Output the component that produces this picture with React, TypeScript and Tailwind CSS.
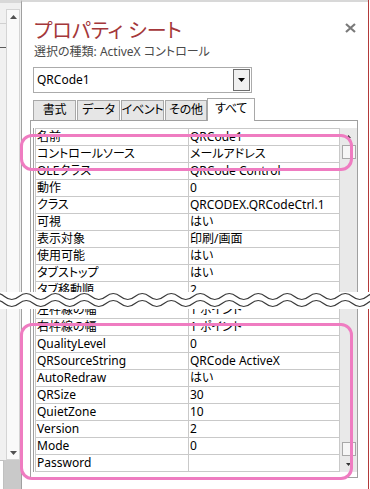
const upperRows: [string, string][] = [
  ["名前", "QRCode1"],
  ["コントロールソース", "メールアドレス"],
  ["OLEクラス", "QRCode Control"],
  ["動作", "0"],
  ["クラス", "QRCODEX.QRCodeCtrl.1"],
  ["可視", "はい"],
  ["表示対象", "印刷/画面"],
  ["使用可能", "はい"],
  ["タブストップ", "はい"],
  ["タブ移動順", "2"],
];

const lowerRows: [string, string][] = [
  ["左枠線の幅", "1 ポイント"],
  ["右枠線の幅", "1 ポイント"],
  ["QualityLevel", "0"],
  ["QRSourceString", "QRCode ActiveX"],
  ["AutoRedraw", "はい"],
  ["QRSize", "30"],
  ["QuietZone", "10"],
  ["Version", "2"],
  ["Mode", "0"],
  ["Password", ""],
];

const wave = (y: number) => {
  let d = `M-10 ${y}`;
  for (let x = -10; x < 390; x += 29) {
    d += ` Q${x + 7.25} ${y - 6} ${x + 14.5} ${y} Q${x + 21.75} ${y + 6} ${x + 29} ${y}`;
  }
  return d;
};

const Row = ({ name, value }: { name: string; value: string }) => (
  <div className="flex h-[17px] border-b border-[#c9c9c9] text-[12px] leading-[16px] text-black">
    <div className="w-[153px] border-l border-[#c9c9c9] pl-[1px] whitespace-nowrap overflow-hidden">{name}</div>
    <div className="w-[152px] border-x border-[#c9c9c9] pl-[1px] whitespace-nowrap overflow-hidden">{value}</div>
  </div>
);

const Tri = ({ down }: { down?: boolean }) => (
  <svg width="7" height="4" viewBox="0 0 7 4">
    <path d={down ? "M0 0H7L3.5 4Z" : "M0 4H7L3.5 0Z"} fill="#505050" />
  </svg>
);

const App = () => {
  return (
    <div className="relative w-[370px] h-[489px] overflow-hidden bg-white flex font-['Noto_Sans','Noto_Sans_CJK_JP',sans-serif] [font-feature-settings:'palt']">
      {/* window behind */}
      <div className="w-[21px] h-full flex flex-col bg-[#f0f0f0] border-t-[3px] border-[#d8d8d8]">
        <div className="flex flex-1">
          <div className="w-[6px] flex flex-col">
            <div className="h-[21px] border-b border-[#d0d0d0]" />
            <div className="h-[24px] border-b border-[#5a5a5a]" />
          </div>
          <div className="w-[14px] mt-[6px] border border-[#d4d4d4] bg-[#f9f9f9] flex flex-col justify-between">
            <div className="h-[13px] flex items-center justify-center">
              <Tri />
            </div>
            <div className="h-[13px] flex items-center justify-center">
              <Tri down />
            </div>
          </div>
        </div>
        <div className="h-[29px] flex">
          <div className="w-[4px] bg-white border-t border-r border-[#c0c0c0]" />
          <div className="flex-1 bg-[#c9c9c9]" />
        </div>
      </div>

      {/* property sheet */}
      <div className="w-[347px] h-full border-l border-[#a0a0a0] border-t-2 border-t-[#d8d8d8] flex flex-col pt-[15px]">
        <div className="flex justify-between items-start pl-[12px] pr-[12px]">
          <h1 className="text-[20px] leading-[27px] text-[#a4373a]">プロパティ シート</h1>
          <svg width="11" height="10" viewBox="0 0 11 10" className="mt-[6px]">
            <path d="M1 1L10 9M10 1L1 9" stroke="#7a7a7a" strokeWidth="2.2" />
          </svg>
        </div>
        <p className="pl-[12px] text-[12px] leading-[16px] text-[#4a4a4a]">選択の種類: ActiveX コントロール</p>

        <div className="ml-[11px] mt-[7px] w-[219px] h-[26px] border border-[#ababab] flex items-center justify-between pl-[3px] pr-[1px]">
          <span className="text-[12px] text-black">QRCode1</span>
          <div className="w-[17px] h-[22px] border border-[#6e6e6e] bg-[#f0f0f0] flex items-center justify-center">
            <svg width="7" height="4" viewBox="0 0 7 4">
              <path d="M0 0H7L3.5 4Z" fill="#000" />
            </svg>
          </div>
        </div>

        <div className="ml-[11px] mt-[4px] h-[23px] flex items-end relative z-10 text-[12px] text-black whitespace-nowrap tracking-[-0.3px]">
          <div className="w-[43px] mr-[1px] h-[20px] border border-b-0 border-[#a8a8a8] bg-[#e6e6e6] flex justify-center leading-[18px] overflow-hidden">書式</div>
          <div className="w-[43px] mr-[1px] h-[20px] border border-b-0 border-[#a8a8a8] bg-[#e6e6e6] flex justify-center leading-[18px] overflow-hidden">データ</div>
          <div className="w-[43px] mr-[1px] h-[20px] border border-b-0 border-[#a8a8a8] bg-[#e6e6e6] flex justify-center leading-[18px] overflow-hidden">イベント</div>
          <div className="w-[42px] h-[20px] border border-b-0 border-[#a8a8a8] bg-[#e6e6e6] flex justify-center leading-[18px] overflow-hidden">その他</div>
          <div className="w-[48px] h-[23px] -mb-[1px] border border-b-0 border-[#a8a8a8] bg-white flex justify-center leading-[20px]">すべて</div>
        </div>

        <div className="ml-[8px] w-[328px] h-[358px] border border-[#a0a0a0] pt-[7px] pl-[2px]">
          <div className="flex border-l border-[#a0a0a0] pl-[1px]">
            <div className="border-t border-[#c9c9c9]">
              {upperRows.map(([n, v]) => (
                <Row key={n} name={n} value={v} />
              ))}
              <div className="h-[3px] border-b border-[#c9c9c9]" />
              {lowerRows.map(([n, v]) => (
                <Row key={n} name={n} value={v} />
              ))}
            </div>
            <div className="w-[17px] bg-[#e9e9e9] flex flex-col items-center">
              <div className="h-[17px] flex items-center justify-center">
                <svg width="5" height="3" viewBox="0 0 5 3">
                  <path d="M0 3H5L2.5 0Z" fill="#333" />
                </svg>
              </div>
              <div className="w-[14px] h-[14px] border border-[#a8a8a8] bg-[#f6f6f6]" />
              <div className="flex-1" />
              <div className="w-[14px] h-[14px] border border-[#a8a8a8] bg-[#f6f6f6]" />
              <div className="h-[16px] flex items-center justify-center">
                <svg width="5" height="3" viewBox="0 0 5 3">
                  <path d="M0 0H5L2.5 3Z" fill="#333" />
                </svg>
              </div>
            </div>
          </div>
        </div>
      </div>

      <div className="w-[1px] h-full bg-[#b23a3a]" />

      {/* break mark */}
      <div className="absolute left-0 top-[292px] w-[370px] h-[17px] bg-white">
        <svg width="370" height="17" viewBox="0 0 370 17">
          <path d={wave(4.5)} fill="none" stroke="#3a3a3a" strokeWidth="1.2" />
          <path d={wave(11.5)} fill="none" stroke="#3a3a3a" strokeWidth="1.2" />
        </svg>
      </div>

      {/* highlight marks */}
      <div className="absolute left-[20px] top-[134px] w-[333px] h-[37px] border-[3px] border-[#ef7cc1] rounded-[12px]" />
      <div className="absolute left-[20px] top-[323px] w-[333px] h-[157px] border-[3px] border-[#ef7cc1] rounded-[12px]" />
    </div>
  );
};

export default App;
